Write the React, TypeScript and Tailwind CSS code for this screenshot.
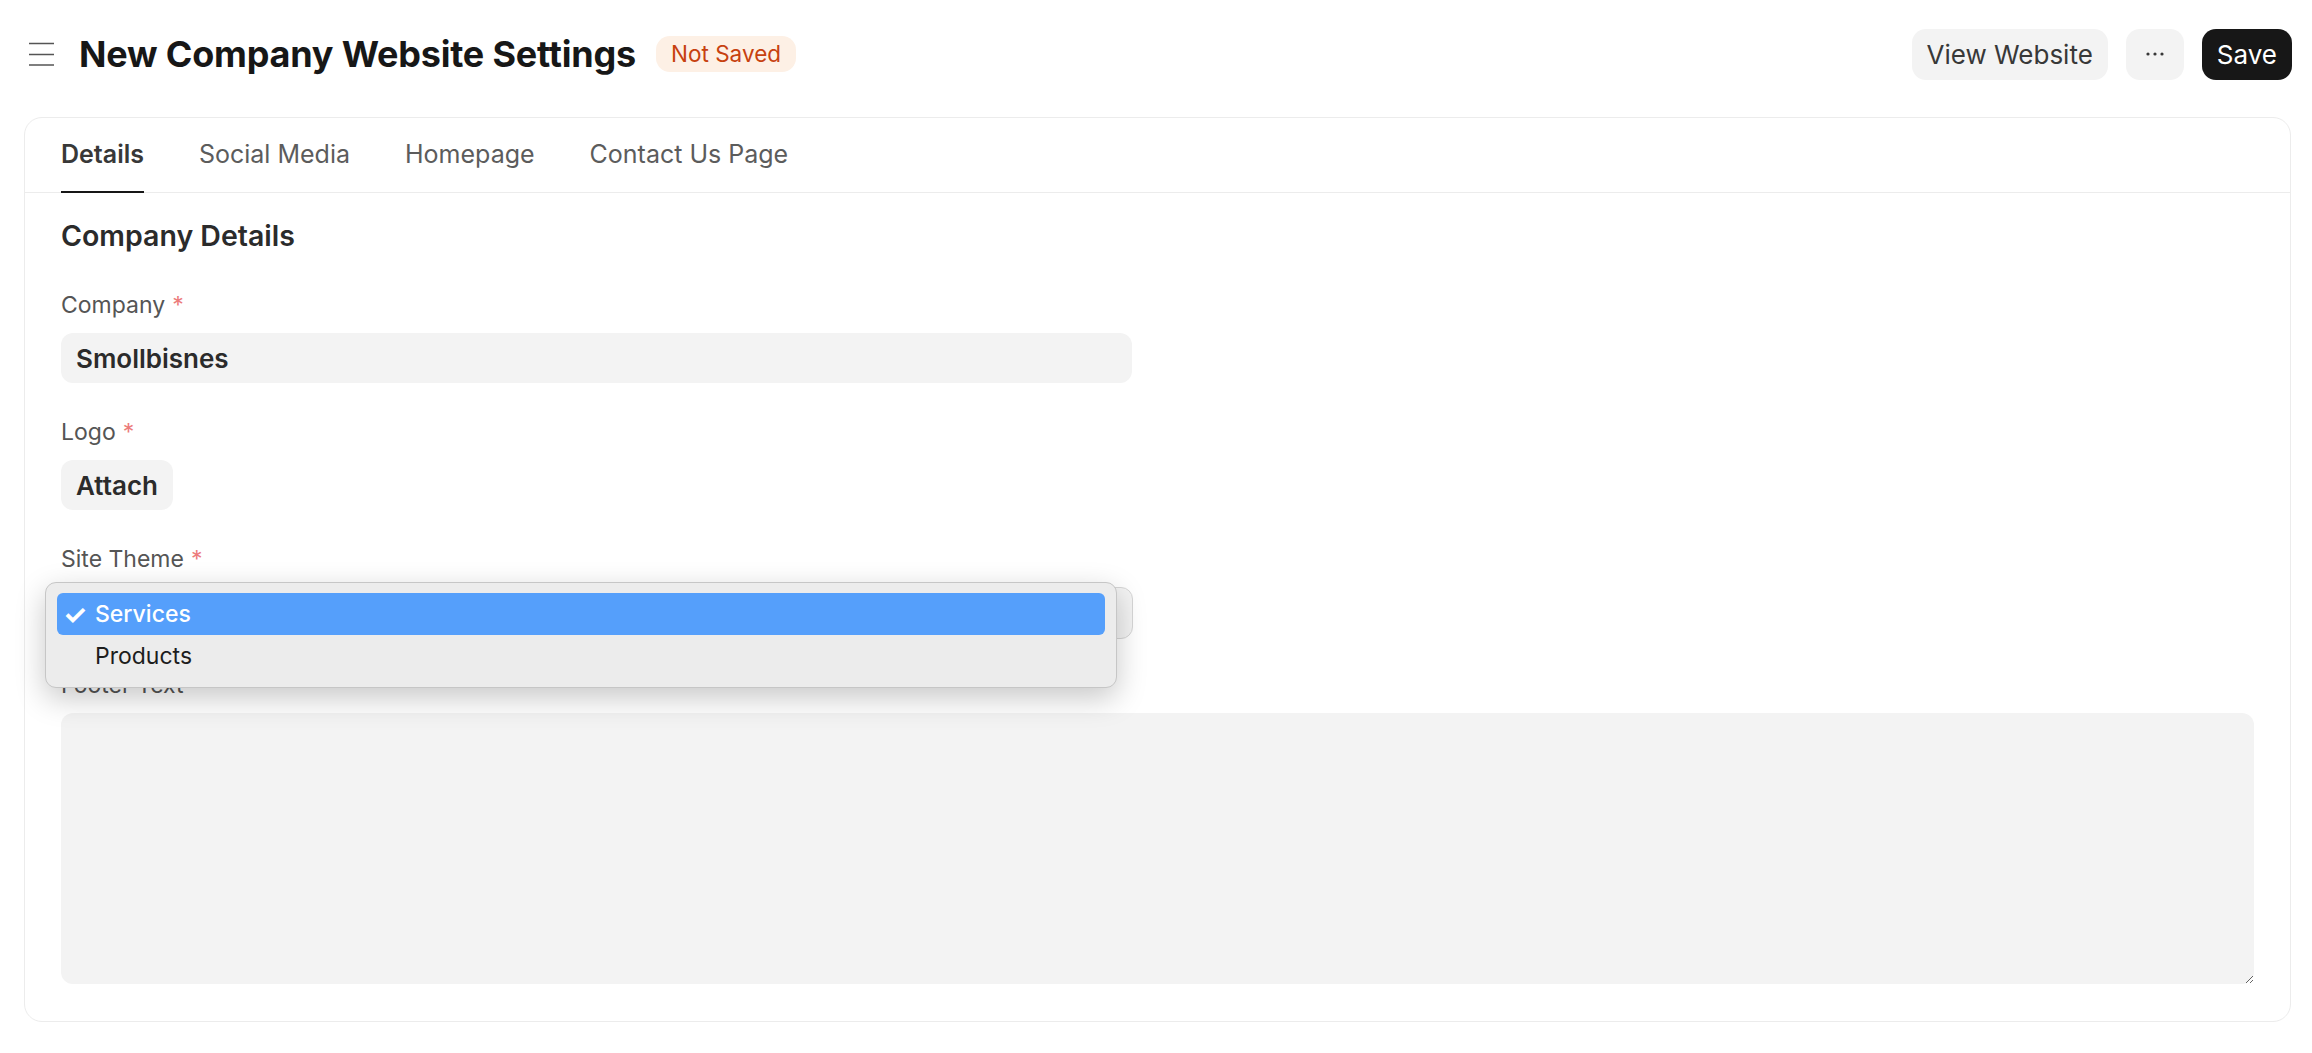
import React from 'react';

const tabs = ['Details', 'Social Media', 'Homepage', 'Contact Us Page'];

function Label({ text }: { text: string }) {
  return (
    <div className="h-[28px] leading-[28px] text-[23px] text-[#555555]">
      {text}
      <span className="ml-[7px] text-[#ec7b7b]">*</span>
    </div>
  );
}

export default function App() {
  return (
    <div className="min-h-[1053px] bg-white font-['Inter',sans-serif] text-[#171717]">
      {/* header */}
      <header className="flex h-[108px] items-center pl-[29px] pr-[20px]">
        <svg width="26" height="26" viewBox="0 0 26 26" className="shrink-0 text-[#555555]">
          <path d="M0 2.5H25M0 13.5H25M0 24H25" stroke="currentColor" strokeWidth="1.6" />
        </svg>
        <h1 className="ml-[24px] text-[36px] font-bold leading-none tracking-[-0.2px] text-[#171717]">
          New Company Website Settings
        </h1>
        <span className="ml-[20px] flex h-[36px] items-center rounded-[14px] bg-[#fdf0e5] px-[15px] text-[22.5px] text-[#c7410f]">
          Not Saved
        </span>
        <div className="ml-auto flex items-center gap-[18px]">
          <button className="h-[51px] rounded-[14px] bg-[#f3f3f3] px-[15px] text-[26px] text-[#383838]">
            View Website
          </button>
          <button className="flex h-[51px] w-[58px] items-center justify-center rounded-[14px] bg-[#f3f3f3] text-[#383838]">
            <svg width="18" height="4" viewBox="0 0 18 4">
              <circle cx="2" cy="2" r="1.6" fill="currentColor" />
              <circle cx="9" cy="2" r="1.6" fill="currentColor" />
              <circle cx="16" cy="2" r="1.6" fill="currentColor" />
            </svg>
          </button>
          <button className="h-[51px] rounded-[14px] bg-[#171717] px-[15px] text-[26px] text-white">
            Save
          </button>
        </div>
      </header>

      {/* card */}
      <div className="ml-[24px] mr-[21px] mt-[9px] rounded-[18px] border border-[#ececec]">
        <nav className="flex h-[75px] gap-[55px] border-b border-[#ececec] px-[36px]">
          {tabs.map((t, i) => (
            <div
              key={t}
              className={
                i === 0
                  ? 'relative flex items-center text-[25px] font-semibold text-[#383838]'
                  : 'relative flex items-center text-[25px] text-[#5c5c5c]'
              }
            >
              {t}
              {i === 0 && <span className="absolute bottom-[-1px] left-0 right-0 h-[2px] bg-[#171717]" />}
            </div>
          ))}
        </nav>

        <section className="px-[36px] pb-[37px] pt-[27px]">
          <h2 className="h-[32px] text-[28.5px] font-semibold leading-[32px] text-[#2b2b2b]">Company Details</h2>

          <div className="mt-[39px]">
            <Label text="Company" />
            <div className="mt-[14px] flex h-[50px] w-[1071px] items-center rounded-[12px] bg-[#f3f3f3] px-[15px] text-[26px] font-semibold text-[#2b2b2b]">
              Smollbisnes
            </div>
          </div>

          <div className="mt-[35px]">
            <Label text="Logo" />
            <button className="mt-[14px] h-[50px] rounded-[12px] bg-[#f3f3f3] px-[15px] text-[26px] font-semibold text-[#2b2b2b]">
              Attach
            </button>
          </div>

          <div className="mt-[35px]">
            <Label text="Site Theme" />
            <div className="relative mt-[14px]">
              <div className="h-[52px] w-[1072px] rounded-[12px] border border-[#d6d6d6] bg-[#f3f3f3]" />
              {/* open native-style menu */}
              <div className="absolute left-[-16px] top-[-5px] w-[1072px] rounded-[11px] border border-[#c6c6c6] bg-[#ececec] px-[11px] py-[10px] shadow-[0_10px_30px_rgba(0,0,0,0.22)]">
                <div className="flex h-[42px] items-center rounded-[6px] bg-[#559ffb] text-[23px] font-medium text-white">
                  <span className="w-[38px] pl-[6px] text-[27px] font-bold leading-none">✓</span>
                  Services
                </div>
                <div className="flex h-[42px] items-center text-[23px] text-[#1d1d1d]">
                  <span className="w-[38px]" />
                  Products
                </div>
              </div>
            </div>
          </div>

          <div className="mt-[32px]">
            <div className="h-[28px] leading-[28px] text-[23px] text-[#555555]">Footer Text</div>
            <textarea className="mt-[14px] block h-[271px] w-full resize-y rounded-[12px] bg-[#f3f3f3] outline-none" />
          </div>
        </section>
      </div>
    </div>
  );
}
